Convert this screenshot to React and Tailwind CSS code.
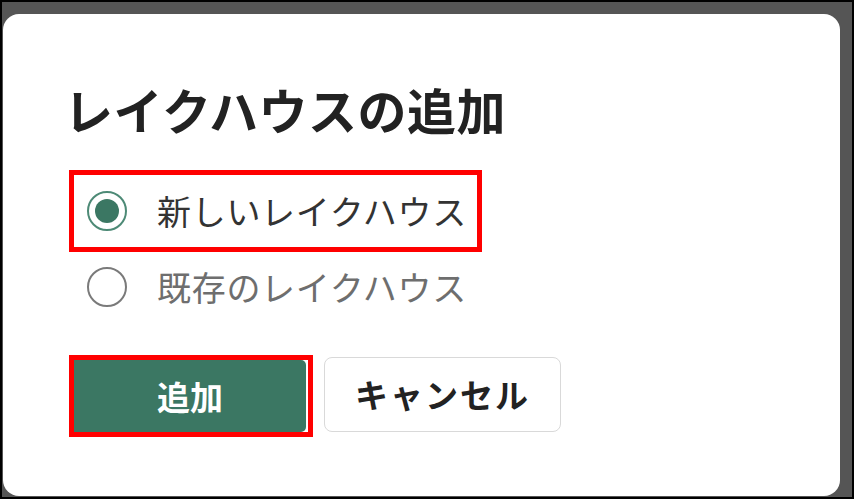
import React from "react";

const font = { fontFamily: '"Noto Sans CJK JP", "Noto Sans", sans-serif' };

const Radio = ({ checked }) => (
  <span
    className={`w-[40px] h-[40px] rounded-full flex items-center justify-center shrink-0 ${
      checked ? "border-[2px] border-[#4d8a76]" : "border-[2px] border-[#7a7a7a]"
    }`}
  >
    {checked && <span className="w-[24px] h-[24px] rounded-full bg-[#3b7763]" />}
  </span>
);

export default function App() {
  return (
    <div
      className="w-[854px] h-[499px] border-2 border-black bg-[#555555] flex pt-[12px] pr-[12px] pl-px pb-px"
      style={font}
    >
      <div className="flex-1 bg-white rounded-[16px] flex flex-col pl-[66px] pt-[70px]">
        {/* Title */}
        <h1 className="-ml-[5px] text-[49px] leading-[49px] h-[49px] tracking-[0.5px] font-bold text-[#222222] whitespace-nowrap">
          レイクハウスの追加
        </h1>

        {/* Options */}
        <div className="mt-[37px] w-[413px] h-[82px] border-[5px] border-[#ff0000] flex items-center pl-[13px] gap-[30px]">
          <Radio checked />
          <span className="text-[34px] leading-none tracking-[0.7px] text-[#333333] whitespace-nowrap">新しいレイクハウス</span>
        </div>
        <div className="mt-[15px] h-[40px] flex items-center pl-[18px] gap-[30px]">
          <Radio />
          <span className="text-[34px] leading-none tracking-[0.7px] text-[#6e6e6e] whitespace-nowrap">既存のレイクハウス</span>
        </div>

        {/* Actions */}
        <div className="mt-[48px] flex items-start">
          <div className="w-[244px] h-[82px] border-[5px] border-[#ff0000] flex">
            <button className="w-[232px] h-full bg-[#3b7763] rounded-r-[5px] text-white text-[33px] font-bold leading-none flex items-center justify-center">
              追加
            </button>
          </div>
          <button className="ml-[11px] mt-[2px] w-[237px] h-[75px] border-[1.5px] border-[#d9d9d9] rounded-[8px] bg-white text-[#222222] text-[33px] tracking-[2px] font-bold leading-none flex items-center justify-center">
            キャンセル
          </button>
        </div>
      </div>
    </div>
  );
}
